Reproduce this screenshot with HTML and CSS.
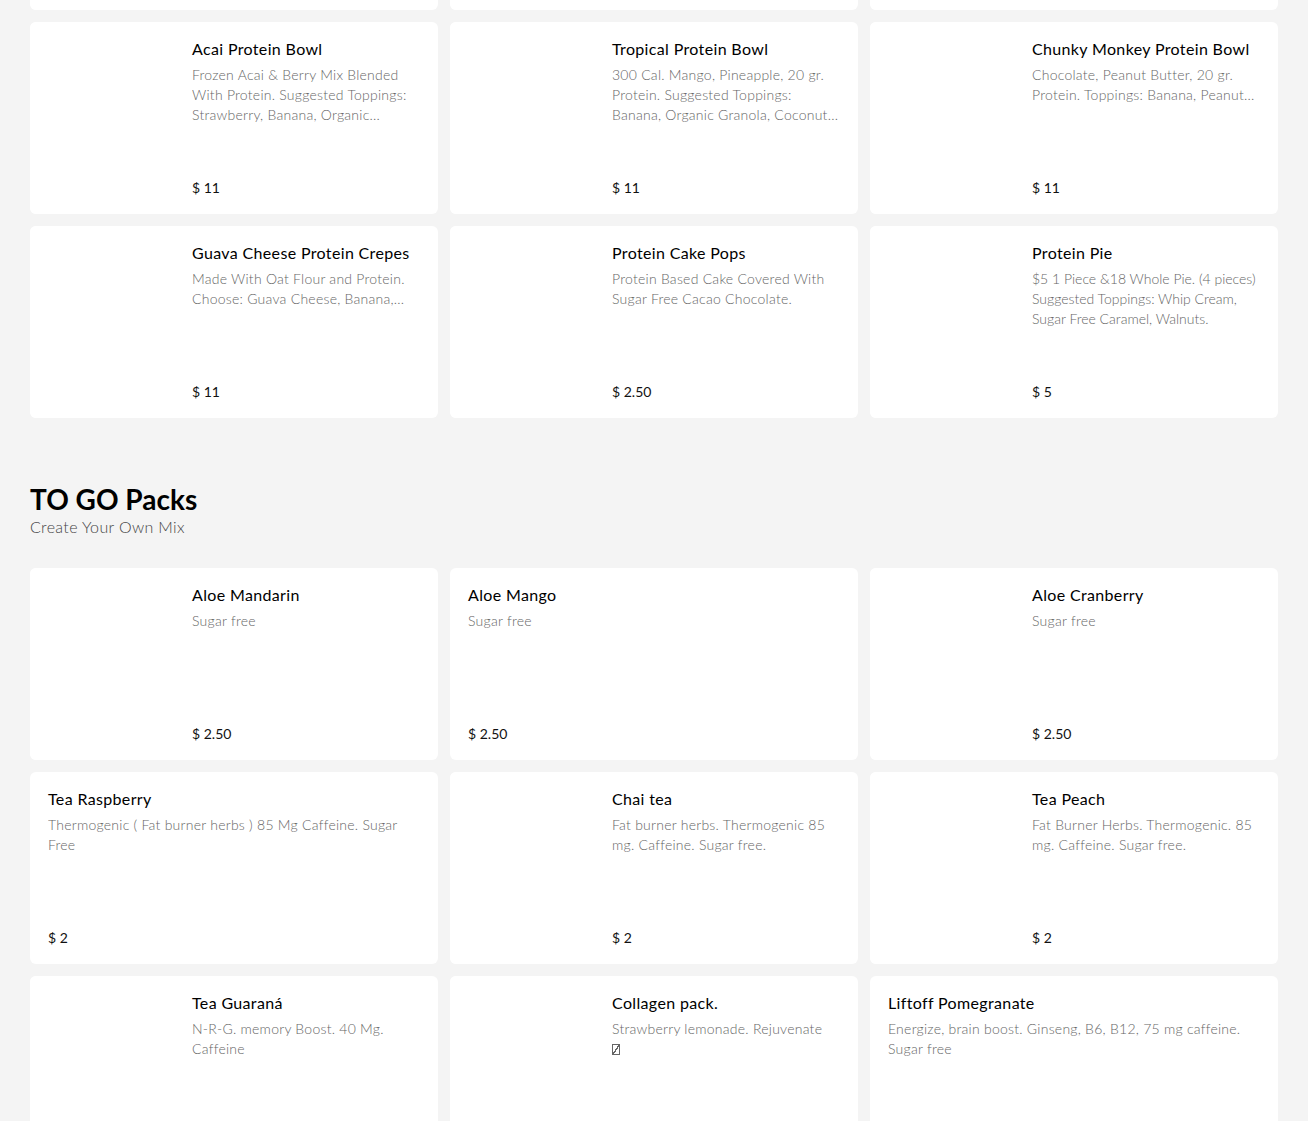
FILE: index.html
```html
<!DOCTYPE html>
<html lang="en">
<head>
<meta charset="utf-8">
<title>Menu</title>
<link rel="stylesheet" href="styles.css">
</head>
<body>
<main class="page">
  <section class="section section-first">
    <div class="grid">
      <article class="card"><div class="thumb"></div><div class="info"></div></article>
      <article class="card"><div class="thumb"></div><div class="info"></div></article>
      <article class="card"><div class="thumb"></div><div class="info"></div></article>

      <article class="card"><div class="thumb"></div><div class="info"><h3 class="name">Acai Protein Bowl</h3><p class="desc">Frozen Acai &amp; Berry Mix Blended With Protein. Suggested Toppings: Strawberry, Banana, Organic...</p><p class="price">$ 11</p></div></article>
      <article class="card"><div class="thumb"></div><div class="info"><h3 class="name">Tropical Protein Bowl</h3><p class="desc">300 Cal. Mango, Pineapple, 20 gr. Protein. Suggested Toppings: Banana, Organic Granola, Coconut...</p><p class="price">$ 11</p></div></article>
      <article class="card"><div class="thumb"></div><div class="info"><h3 class="name">Chunky Monkey Protein Bowl</h3><p class="desc">Chocolate, Peanut Butter, 20 gr. Protein. Toppings: Banana, Peanut...</p><p class="price">$ 11</p></div></article>

      <article class="card"><div class="thumb"></div><div class="info"><h3 class="name">Guava Cheese Protein Crepes</h3><p class="desc">Made With Oat Flour and Protein. Choose: Guava Cheese, Banana,...</p><p class="price">$ 11</p></div></article>
      <article class="card"><div class="thumb"></div><div class="info"><h3 class="name">Protein Cake Pops</h3><p class="desc">Protein Based Cake Covered With Sugar Free Cacao Chocolate.</p><p class="price">$ 2.50</p></div></article>
      <article class="card"><div class="thumb"></div><div class="info"><h3 class="name">Protein Pie</h3><p class="desc desc-tight">$5 1 Piece &amp;18 Whole Pie. (4 pieces) Suggested Toppings: Whip Cream, Sugar Free Caramel, Walnuts.</p><p class="price">$ 5</p></div></article>
    </div>
  </section>

  <section class="section">
    <header class="section-head">
      <h2 class="section-title">TO GO Packs</h2>
      <p class="section-sub">Create Your Own Mix</p>
    </header>
    <div class="grid">
      <article class="card"><div class="thumb"></div><div class="info"><h3 class="name">Aloe Mandarin</h3><p class="desc">Sugar free</p><p class="price">$ 2.50</p></div></article>
      <article class="card"><div class="info"><h3 class="name">Aloe Mango</h3><p class="desc">Sugar free</p><p class="price">$ 2.50</p></div></article>
      <article class="card"><div class="thumb"></div><div class="info"><h3 class="name">Aloe Cranberry</h3><p class="desc">Sugar free</p><p class="price">$ 2.50</p></div></article>

      <article class="card"><div class="info"><h3 class="name">Tea Raspberry</h3><p class="desc">Thermogenic ( Fat burner herbs ) 85 Mg Caffeine. Sugar Free</p><p class="price">$ 2</p></div></article>
      <article class="card"><div class="thumb"></div><div class="info"><h3 class="name">Chai tea</h3><p class="desc">Fat burner herbs. Thermogenic 85 mg. Caffeine. Sugar free.</p><p class="price">$ 2</p></div></article>
      <article class="card"><div class="thumb"></div><div class="info"><h3 class="name">Tea Peach</h3><p class="desc">Fat Burner Herbs. Thermogenic. 85 mg. Caffeine. Sugar free.</p><p class="price">$ 2</p></div></article>

      <article class="card"><div class="thumb"></div><div class="info"><h3 class="name">Tea Guaraná</h3><p class="desc">N-R-G. memory Boost. 40 Mg. Caffeine</p><p class="price">$ 2</p></div></article>
      <article class="card"><div class="thumb"></div><div class="info"><h3 class="name">Collagen pack.</h3><p class="desc">Strawberry lemonade. Rejuvenate<br><span class="tofu"></span></p><p class="price">$ 2.50</p></div></article>
      <article class="card"><div class="info"><h3 class="name">Liftoff Pomegranate</h3><p class="desc">Energize, brain boost. Ginseng, B6, B12, 75 mg caffeine. Sugar free</p><p class="price">$ 2.50</p></div></article>
    </div>
  </section>
</main>
</body>
</html>
```

FILE: styles.css
```css
* { box-sizing: border-box; }

html, body {
  margin: 0;
  padding: 0;
  background: #f4f4f4;
}

body {
  font-family: Lato, "Open Sans", "Liberation Sans", sans-serif;
  color: #000;
  overflow: hidden;
}

.page {
  padding: 0 30px;
  margin-top: -182px;
}

.section-head {
  margin: 0;
  padding-top: 64px;
  padding-bottom: 30px;
}

.section-title {
  margin: 0;
  font-size: 28px;
  line-height: 34px;
  font-weight: 700;
  color: #000;
}

.section-sub {
  margin: 0;
  font-size: 16px;
  line-height: 22px;
  font-weight: 300;
  letter-spacing: 0.35px;
  color: #444;
}

.grid {
  display: grid;
  grid-template-columns: repeat(3, 1fr);
  gap: 12px 12px;
}

.card {
  display: flex;
  height: 192px;
  background: #fff;
  border-radius: 6px;
  overflow: hidden;
}

.thumb {
  flex: 0 0 144px;
  background: #fff;
}

.info {
  flex: 1;
  min-width: 0;
  display: flex;
  flex-direction: column;
  padding: 17px 18px 16px 18px;
}

.name {
  margin: 0;
  font-size: 16px;
  line-height: 19px;
  font-weight: 400;
  letter-spacing: 0.35px;
  color: #000;
}

.desc {
  margin: 7px 0 0;
  font-size: 14px;
  line-height: 20px;
  font-weight: 300;
  letter-spacing: 0.25px;
  color: #666;
  display: -webkit-box;
  -webkit-line-clamp: 3;
  -webkit-box-orient: vertical;
  overflow: hidden;
}

.desc-tight {
  letter-spacing: 0;
}

.price {
  margin: auto 0 0;
  font-size: 14px;
  line-height: 20px;
  font-weight: 400;
  color: #111;
}

.tofu {
  display: inline-block;
  width: 8px;
  height: 11px;
  border: 1px solid #666;
  vertical-align: -1px;
  background: linear-gradient(to bottom right, transparent 45%, #666 45%, #666 58%, transparent 58%);
}
```
